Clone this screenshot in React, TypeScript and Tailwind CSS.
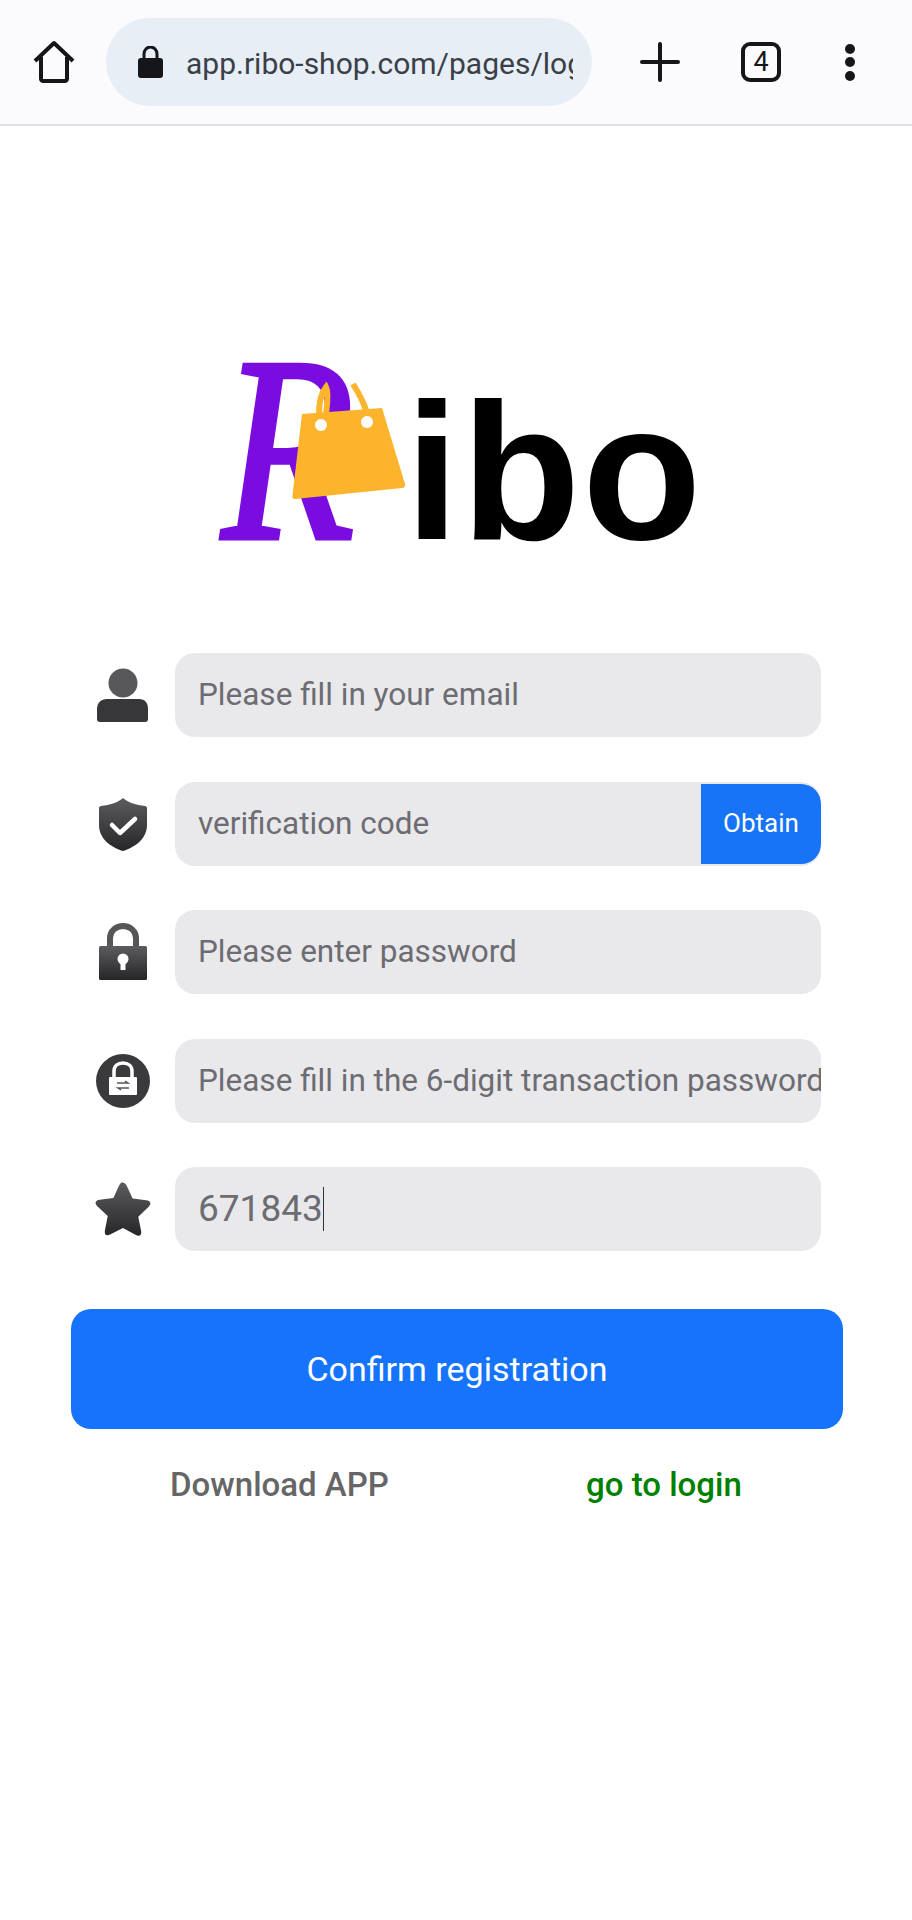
import React from 'react';

const fields = [
  { icon: 'user', text: 'Please fill in your email' },
  { icon: 'shield', text: 'verification code', obtain: true },
  { icon: 'lock', text: 'Please enter password' },
  { icon: 'trade', text: 'Please fill in the 6-digit transaction password' },
  { icon: 'star', text: '671843', caret: true },
];

const Grad = ({ id }: { id: string }) => (
  <defs>
    <linearGradient id={id} x1="0" y1="0" x2="0" y2="1">
      <stop offset="0" stopColor="#5c5c5e" />
      <stop offset="1" stopColor="#262628" />
    </linearGradient>
  </defs>
);

const FieldIcon = ({ name }: { name: string }) => {
  const fill = `url(#g-${name})`;
  return (
    <svg width="62" height="62" viewBox="0 0 62 62" overflow="visible">
      <Grad id={`g-${name}`} />
      {name === 'user' && (
        <>
          <circle cx="31" cy="19" r="14.500" fill="#58585a" />
          <path d="M5 45c0-6 4-10 10-10h32c6 0 9 4 9 10v10c0 2-1 3-3 3H8c-2 0-3-1-3-3z" fill="#37373a" />
        </>
      )}
      {name === 'shield' && (
        <>
          <path d="M31 5c6 5 13 7 22 8 1 0 2 1 2 2v17c0 13-11 22-24 26C18 54 7 45 7 32V15c0-1 1-2 2-2 9-1 16-3 22-8z" fill={fill} />
          <path d="M20 32l8 8 15-14" fill="none" stroke="#fff" strokeWidth="4.500" strokeLinecap="round" strokeLinejoin="round" />
        </>
      )}
      {name === 'lock' && (
        <>
          <path d="M18 26V17c0-7 6-12 13-12s13 5 13 12v9" fill="none" stroke="#565658" strokeWidth="6" />
          <rect x="7" y="25" width="48" height="34" rx="1.500" fill={fill} />
          <circle cx="31" cy="38" r="5.500" fill="#fff" />
          <rect x="28.500" y="38" width="5" height="11" fill="#fff" />
        </>
      )}
      {name === 'trade' && (
        <>
          <circle cx="31" cy="31" r="27" fill="#3a3a3c" />
          <path d="M22 28v-7c0-5 4-8 9-8s9 3 9 8v7" fill="none" stroke="#fff" strokeWidth="3.500" />
          <rect x="17" y="27" width="28" height="18" rx="1" fill="#fff" />
          <path d="M25 33h11l-3-2M37 38H26l3 2" fill="none" stroke="#555" strokeWidth="1.500" />
        </>
      )}
      {name === 'star' && (
        <path
          transform="translate(31 33) scale(1.13) translate(-31 -31)"
          d="M31 6c1.500 0 2.500 1 3.500 3l5 11 12 1.500c4 .5 5 3 2 6l-9 8.500 2.500 12.500c.8 4-1.500 5.500-5 3.500L31 46l-11 5.500c-3.500 2-5.800.5-5-3.500l2.500-12.500-9-8.500c-3-3-2-5.500 2-6l12-1.500 5-11c1-2 2-3 3.500-3z"
          fill={fill}
        />
      )}
    </svg>
  );
};

const TopBar = () => (
  <div className="flex h-[126px] items-center border-b-2 border-[#e2e2e4] bg-[#fbfbfe] text-[#14161a]">
    <svg className="ml-[32px]" width="44" height="44" viewBox="0 0 44 44" fill="none" stroke="#14161a" strokeWidth="4" strokeLinejoin="round">
      <path d="M3 21L22 3l19 18M9 17v22c0 1 1 2 2 2h22c1 0 2-1 2-2V17" />
    </svg>
    <div className="ml-[30px] flex h-[88px] w-[486px] items-center rounded-full bg-[#e8eef5] pl-[32px]">
      <svg width="25" height="32" viewBox="0 0 25 32">
        <path d="M6 13V8c0-4 3-7 6.500-7S19 4 19 8v5" fill="none" stroke="#14161a" strokeWidth="3" />
        <rect x="0" y="12" width="25" height="20" rx="3" fill="#14161a" />
      </svg>
      <div className="mt-[3px] ml-[23px] w-[387px] overflow-hidden font-['Roboto',sans-serif] text-[30px] whitespace-nowrap text-[#3a4048]">
        app.ribo-shop.com/pages/login
      </div>
    </div>
    <svg className="ml-[48px]" width="40" height="40" viewBox="0 0 40 40" stroke="#14161a" strokeWidth="4" strokeLinecap="round">
      <path d="M20 2v36M2 20h36" />
    </svg>
    <div className="ml-[61px] flex h-[40px] w-[40px] items-center justify-center rounded-[9px] border-[4px] border-[#14161a] font-['Roboto',sans-serif] text-[27px]">
      4
    </div>
    <div className="ml-[64px] flex flex-col gap-[3.500px]">
      <div className="h-[10px] w-[10px] rounded-full bg-[#14161a]" />
      <div className="h-[10px] w-[10px] rounded-full bg-[#14161a]" />
      <div className="h-[10px] w-[10px] rounded-full bg-[#14161a]" />
    </div>
  </div>
);

const Logo = () => (
  <div className="mt-[248px] ml-[218px] flex h-[195px]">
    <div className="relative w-[187px]">
      <span className="absolute top-[-70px] left-[4px] origin-left scale-x-[0.82] font-['Liberation_Serif',serif] text-[264px] leading-[1.1] text-[#7a0ce0] italic [-webkit-text-stroke:5px_#7a0ce0]">R</span>
      <svg className="absolute top-[-24px] left-0" width="190" height="150" viewBox="218 350 190 150">
        <path d="M319 414c0-12 3-22 7-27 3 6 1 18 0 27M353 384c5 8 10 17 13 26" fill="none" stroke="#fbb42c" strokeWidth="6" />
        <path d="M302 414l80-6 23 76c.5 2-.5 4-3 4l-107 11c-2 0-3-1-2.500-4z" fill="#fbb42c" />
        <circle cx="321" cy="425" r="6" fill="#fff" />
        <circle cx="367" cy="422" r="6" fill="#fff" />
      </svg>
    </div>
    <div className="font-['Liberation_Sans',sans-serif] text-[195px] leading-[195px] font-bold tracking-[2px] text-black">ibo</div>
  </div>
);

export default function App() {
  return (
    <div className="min-h-[1920px] bg-white font-['Roboto',sans-serif]">
      <TopBar />
      <Logo />

      <div className="mt-[84px] ml-[92px] flex w-[729px] flex-col gap-[44.500px]">
        {fields.map(f => (
          <div key={f.icon} className="flex items-center gap-[21px]">
            <FieldIcon name={f.icon} />
            <div className="flex h-[84px] flex-1 items-center overflow-hidden rounded-[20px] bg-[#e9e9ec] pl-[23px] text-[31.500px] whitespace-nowrap text-[#6c6c72]">
              <span className={f.caret ? 'text-[37px]' : ''}>{f.text}</span>
              {f.caret && <span className="h-[44px] w-[1px] shrink-0 bg-[#333]" />}
              {f.obtain && (
                <button className="ml-auto flex h-[80px] w-[120px] items-center justify-center rounded-r-[20px] bg-[#1774f7] text-[26px] text-white">
                  Obtain
                </button>
              )}
            </div>
          </div>
        ))}
      </div>

      <button className="mt-[58px] ml-[71px] block h-[120px] w-[772px] rounded-[20px] bg-[#1673fb] text-[34px] text-white">
        Confirm registration
      </button>

      <div className="mt-[31px] flex text-[33px] font-medium">
        <div className="ml-[170px] w-[416px] text-[#666]">Download APP</div>
        <div className="text-[#008000]">go to login</div>
      </div>
    </div>
  );
}
